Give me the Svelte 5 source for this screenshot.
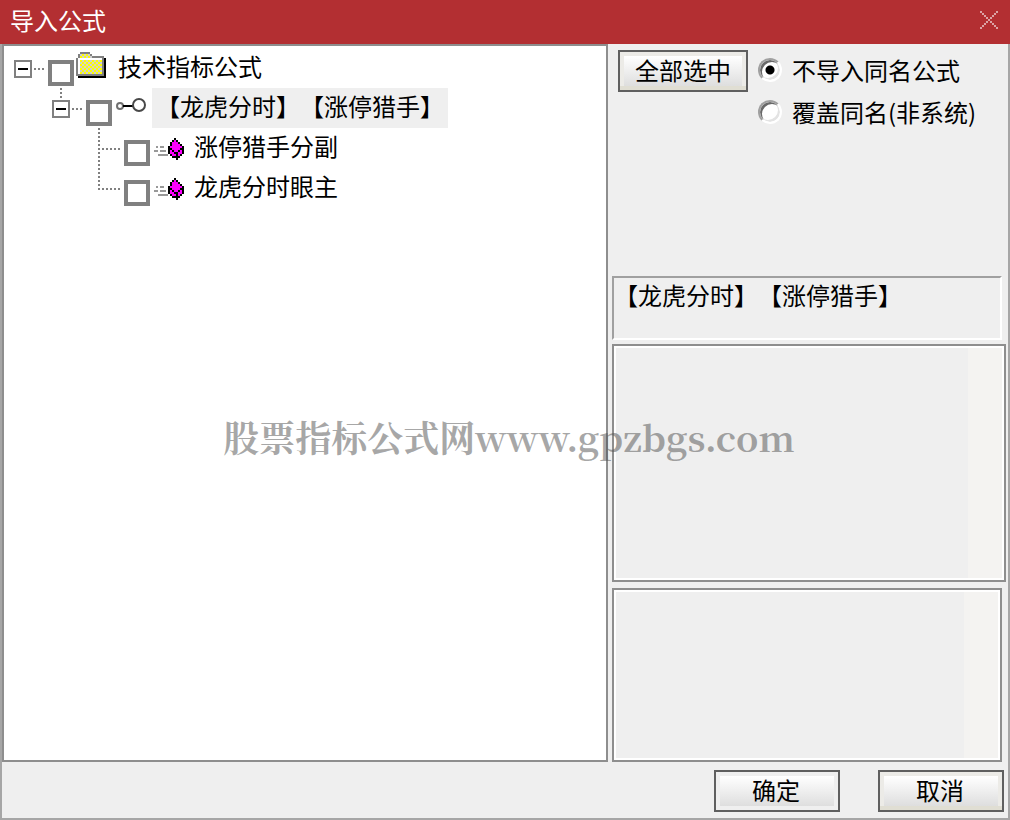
<script lang="ts">
	interface TreeNode {
		name: string;
		icon: 'folder' | 'key' | 'formula';
		checked: boolean;
		open?: boolean;
		selected?: boolean;
		children?: TreeNode[];
	}

	let tree = $state<TreeNode[]>([
		{
			name: '技术指标公式',
			icon: 'folder',
			checked: false,
			open: true,
			children: [
				{
					name: '【龙虎分时】【涨停猎手】',
					icon: 'key',
					checked: false,
					open: true,
					selected: true,
					children: [
						{ name: '涨停猎手分副', icon: 'formula', checked: false },
						{ name: '龙虎分时眼主', icon: 'formula', checked: false }
					]
				}
			]
		}
	]);

	let mode = $state('skip');

	function setChecked(nodes: TreeNode[], value: boolean) {
		for (const node of nodes) {
			node.checked = value;
			if (node.children) setChecked(node.children, value);
		}
	}
</script>

{#snippet icon(kind: string)}
	{#if kind === 'folder'}
		<svg class="icon folder" width="30" height="26" viewBox="0 0 15 13" shape-rendering="crispEdges">
			<defs>
				<pattern id="dither" width="2" height="2" patternUnits="userSpaceOnUse">
					<rect width="2" height="2" fill="#d0d0d0" />
					<path d="M0 0h1v1H0zM1 1h1v1H1z" fill="#ff0" />
				</pattern>
			</defs>
			<path d="M14 3h1v10H1v-1h13z" fill="#000" />
			<path d="M2 0h5v1h1v1h6v10H0V3h1V1h1z" fill="#808080" />
			<path d="M1 3h12v1H2v7H1z" fill="#fff" />
			<path d="M2 1h5v1h1v1H2zM2 4h11v7H2z" fill="url(#dither)" />
		</svg>
	{:else if kind === 'key'}
		<svg class="icon key" width="30" height="14" viewBox="0 0 30 14" fill="none">
			<circle cx="4" cy="8" r="3" stroke="#707070" stroke-width="2" />
			<path d="M7 8h10" stroke="#000" stroke-width="2" />
			<circle cx="23" cy="7" r="6" stroke="#484848" stroke-width="2" />
		</svg>
	{:else}
		<svg class="icon formula" width="30" height="22" viewBox="0 0 15 11" shape-rendering="crispEdges">
			<path d="M1 4h1v1H1zM3 4h2v1H3zM0 6h2v1H0zM3 6h3v1H3zM2 8h5v1H2z" fill="#999" />
			<path d="M10 1h1v1h1v1h1v1h1v5h-1v1h-4V9H8V4h1V2h1z" fill="#f0f" />
			<path
				d="M10 0h1v1h-1zM9 1h1v1H9zM11 1h1v1h-1zM8 2h1v2H8zM12 2h1v1h-1zM13 3h1v1h-1zM7 4h1v4H7zM14 4h1v4h-1zM8 5h1v1H8zM13 5h1v1h-1zM9 6h1v1H9zM12 6h1v1h-1zM10 7h2v1h-2zM11 8h1v3h-1zM8 8h1v1H8zM13 8h1v1h-1zM9 9h2v1H9zM12 9h1v1h-1z"
				fill="#000"
			/>
		</svg>
	{/if}
{/snippet}

{#snippet branch(nodes: TreeNode[], level: number)}
	<ul class="branch">
		{#each nodes as node, i}
			<li>
				<div class="row">
					{#if node.children}
						<button class="toggle" aria-label={node.open ? '折叠' : '展开'} onclick={() => (node.open = !node.open)}>
							<svg width="34" height="40" viewBox="0 0 34 40" shape-rendering="crispEdges" fill="none" stroke="#808080" stroke-width="2">
								{#if level > 0}
									<path d="M9 0v10" stroke-dasharray="2 2" />
								{/if}
								<path d="M20 21h10" stroke-dasharray="2 2" />
								<rect x="1" y="13" width="16" height="16" fill="#fff" />
								<path d={node.open ? 'M4 21h10' : 'M4 21h10M9 16v10'} stroke="#000" />
							</svg>
						</button>
					{:else}
						<svg width="34" height="40" viewBox="0 0 34 40" shape-rendering="crispEdges" fill="none" stroke="#808080" stroke-width="2" stroke-dasharray="2 2">
							<path d={i < nodes.length - 1 ? 'M9 0v40' : 'M9 0v22'} />
							<path d="M8 21h22" />
						</svg>
					{/if}
					<label class="item">
						<input type="checkbox" bind:checked={node.checked} />
						{@render icon(node.icon)}
						<span class="name" class:selected={node.selected}>{node.name}</span>
					</label>
				</div>
				{#if node.children && node.open}
					{@render branch(node.children, level + 1)}
				{/if}
			</li>
		{/each}
	</ul>
{/snippet}

<div class="dialog">
	<header class="titlebar">
		<h1>导入公式</h1>
		<button class="close" aria-label="关闭">
			<svg width="18" height="18" viewBox="0 0 9 9" shape-rendering="crispEdges" fill="#dba3a5">
				{#each Array(9) as _, n}
					<rect x={n} y={n} width="1" height="1" />
					<rect x={8 - n} y={n} width="1" height="1" />
				{/each}
			</svg>
		</button>
	</header>

	<div class="frame">
		<main class="content">
			<section class="tree">
				{@render branch(tree, 0)}
			</section>

			<section class="side">
				<div class="options">
					<button class="btn warm" onclick={() => setChecked(tree, true)}>全部选中</button>
					<div class="modes">
						<label><input type="radio" name="mode" value="skip" bind:group={mode} />不导入同名公式</label>
						<label><input type="radio" name="mode" value="overwrite" bind:group={mode} />覆盖同名(非系统)</label>
					</div>
				</div>
				<p class="summary">【龙虎分时】【涨停猎手】</p>
				<textarea class="note large" aria-label="公式说明" readonly></textarea>
				<textarea class="note small" aria-label="参数说明" readonly></textarea>
			</section>
		</main>

		<footer class="actions">
			<button class="btn">确定</button>
			<button class="btn warm">取消</button>
		</footer>
	</div>

	<div class="watermark">股票指标公式网www.gpzbgs.com</div>
</div>

<style>
	:global(body) {
		margin: 0;
	}

	.dialog {
		position: relative;
		display: flex;
		flex-direction: column;
		min-height: 100vh;
		font-family: 'Noto Sans CJK SC', sans-serif;
		font-size: 24px;
		line-height: 36px;
		text-spacing-trim: space-all;
		color: #000;
		background: #efefef;
	}

	.dialog * {
		box-sizing: border-box;
	}

	button,
	input,
	textarea {
		margin: 0;
		font: inherit;
		color: inherit;
	}

	.titlebar {
		display: flex;
		align-items: center;
		justify-content: space-between;
		height: 44px;
		padding: 0 12px 4px 10px;
		background: #b32f32;
		color: #fff;
	}

	h1 {
		margin: 0;
		font-size: 24px;
		font-weight: 400;
	}

	.close {
		display: flex;
		padding: 0;
		border: 0;
		background: none;
	}

	.frame {
		flex: 1;
		display: flex;
		flex-direction: column;
		border: 2px solid #a6a6a6;
		border-top: 0;
	}

	.content {
		flex: 1;
		display: grid;
		grid-template-columns: 606fr 400fr;
	}

	.tree {
		padding: 2px 10px;
		border: 2px solid #8e8e8e;
		background: #fff;
	}

	.branch {
		margin: 0;
		padding: 0;
		list-style: none;
	}

	.branch .branch {
		padding-left: 38px;
	}

	.row {
		display: flex;
		height: 40px;
	}

	.toggle {
		display: flex;
		padding: 0;
		border: 0;
		background: none;
	}

	.item {
		display: flex;
		white-space: nowrap;
	}

	.item input {
		appearance: none;
		width: 26px;
		height: 26px;
		margin-top: 12px;
		border: 4px solid #808080;
		background: #fff;
	}

	.item input:checked {
		background: #000;
		box-shadow: inset 0 0 0 4px #fff;
	}

	.icon {
		margin: 10px 6px 0 4px;
	}

	.folder {
		margin: 4px 8px 0 2px;
	}

	.name {
		padding: 0 4px 4px;
	}

	.selected {
		background: #efefef;
	}

	.side {
		display: flex;
		flex-direction: column;
		padding: 6px 2px 0 4px;
	}

	.options {
		display: flex;
		gap: 10px;
		min-height: 226px;
		padding-left: 6px;
	}

	.btn {
		width: 126px;
		height: 42px;
		padding: 0 2px 2px 0;
		border: 2px solid #5f5f5f;
		box-shadow: inset 0 0 0 4px #efefef;
		background: linear-gradient(#fff 4px, #dedede 34px);
		line-height: 36px;
	}

	.btn.warm {
		box-shadow: inset 0 -4px 0 #e0ded3, inset 0 0 0 4px #ecebe7;
	}

	.options .btn {
		width: 130px;
		padding-right: 0;
	}

	.modes label {
		display: flex;
		align-items: center;
		gap: 10px;
		height: 42px;
		padding-bottom: 2px;
		white-space: nowrap;
	}

	.modes input {
		appearance: none;
		width: 24px;
		height: 24px;
		border: 2px solid;
		border-color: #a0a0a0 #fff #fff #a0a0a0;
		border-radius: 50%;
		background: #fff;
		box-shadow: inset 2px 2px 0 #696969, inset -2px -2px 0 #e3e3e3;
	}

	.modes input:checked {
		background: radial-gradient(circle, #000 4px, #fff 5px);
	}

	.summary {
		height: 64px;
		margin: 0 4px 4px 0;
		border: 2px solid;
		border-color: #a0a0a0 #fff #fff #a0a0a0;
		line-height: 34px;
	}

	.note {
		display: block;
		padding: 4px 38px 4px 4px;
		border: 2px solid #8e8e8e;
		background: linear-gradient(to left, #f4f3f1 36px, #efefef 36px);
		box-shadow: inset 0 0 0 2px #fff;
		outline: 0;
		resize: none;
	}

	.large {
		flex: 226 0 12px;
		margin-bottom: 6px;
	}

	.small {
		flex: 162 0 12px;
		margin-right: 4px;
	}

	.actions {
		display: flex;
		justify-content: flex-end;
		gap: 38px;
		padding: 8px 4px 6px;
	}

	.watermark {
		position: absolute;
		inset: 0;
		display: flex;
		align-items: center;
		justify-content: center;
		padding: 54px 0 0 8px;
		font-family: 'Noto Serif CJK SC', 'Noto Sans CJK SC', serif;
		font-size: 36px;
		font-weight: 700;
		color: rgba(80, 80, 80, 0.5);
		white-space: nowrap;
		pointer-events: none;
	}
</style>
